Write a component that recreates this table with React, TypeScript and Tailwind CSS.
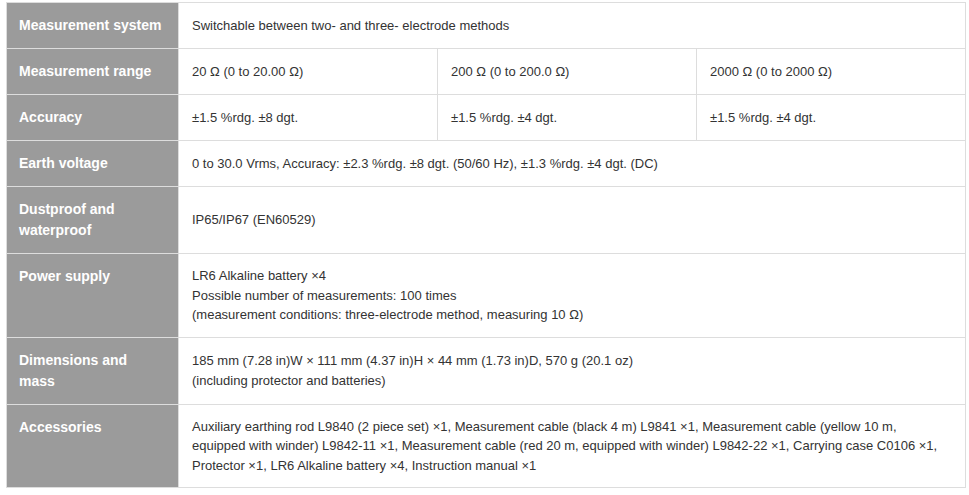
const rows: { label: string; cells: React.ReactNode[] }[] = [
  {
    label: 'Measurement system',
    cells: ['Switchable between two- and three- electrode methods'],
  },
  {
    label: 'Measurement range',
    cells: ['20 Ω (0 to 20.00 Ω)', '200 Ω (0 to 200.0 Ω)', '2000 Ω (0 to 2000 Ω)'],
  },
  {
    label: 'Accuracy',
    cells: ['±1.5 %rdg. ±8 dgt.', '±1.5 %rdg. ±4 dgt.', '±1.5 %rdg. ±4 dgt.'],
  },
  {
    label: 'Earth voltage',
    cells: ['0 to 30.0 Vrms, Accuracy: ±2.3 %rdg. ±8 dgt. (50/60 Hz), ±1.3 %rdg. ±4 dgt. (DC)'],
  },
  {
    label: 'Dustproof and waterproof',
    cells: ['IP65/IP67 (EN60529)'],
  },
  {
    label: 'Power supply',
    cells: [
      <>
        LR6 Alkaline battery ×4
        <br />
        Possible number of measurements: 100 times
        <br />
        (measurement conditions: three-electrode method, measuring 10 Ω)
      </>,
    ],
  },
  {
    label: 'Dimensions and mass',
    cells: [
      <>
        185 mm (7.28 in)W × 111 mm (4.37 in)H × 44 mm (1.73 in)D, 570 g (20.1 oz)
        <br />
        (including protector and batteries)
      </>,
    ],
  },
  {
    label: 'Accessories',
    cells: [
      'Auxiliary earthing rod L9840 (2 piece set) ×1, Measurement cable (black 4 m) L9841 ×1, Measurement cable (yellow 10 m, equipped with winder) L9842-11 ×1, Measurement cable (red 20 m, equipped with winder) L9842-22 ×1, Carrying case C0106 ×1, Protector ×1, LR6 Alkaline battery ×4, Instruction manual ×1',
    ],
  },
];

export default function App() {
  return (
    <div className="min-h-screen bg-white pl-[6px] pt-[2px] font-['Liberation_Sans',Arial,sans-serif]">
      <table className="w-[960px] table-fixed border-collapse">
        <colgroup>
          <col className="w-[172px]" />
          <col className="w-[259px]" />
          <col className="w-[259px]" />
          <col />
        </colgroup>
        <tbody>
          {rows.map((row) => (
            <tr key={row.label}>
              <th className="border border-[#dddddd] bg-[#9b9b9b] px-[12px] py-[12px] text-left align-top text-[14px] leading-[21px] font-bold text-white">
                {row.label}
              </th>
              {row.cells.map((cell, i) => (
                <td
                  key={i}
                  colSpan={row.cells.length === 1 ? 3 : 1}
                  className="border border-[#dddddd] px-[13px] py-[12px] align-middle text-[13px] leading-[19.5px] text-[#333333]"
                >
                  {cell}
                </td>
              ))}
            </tr>
          ))}
        </tbody>
      </table>
    </div>
  );
}
